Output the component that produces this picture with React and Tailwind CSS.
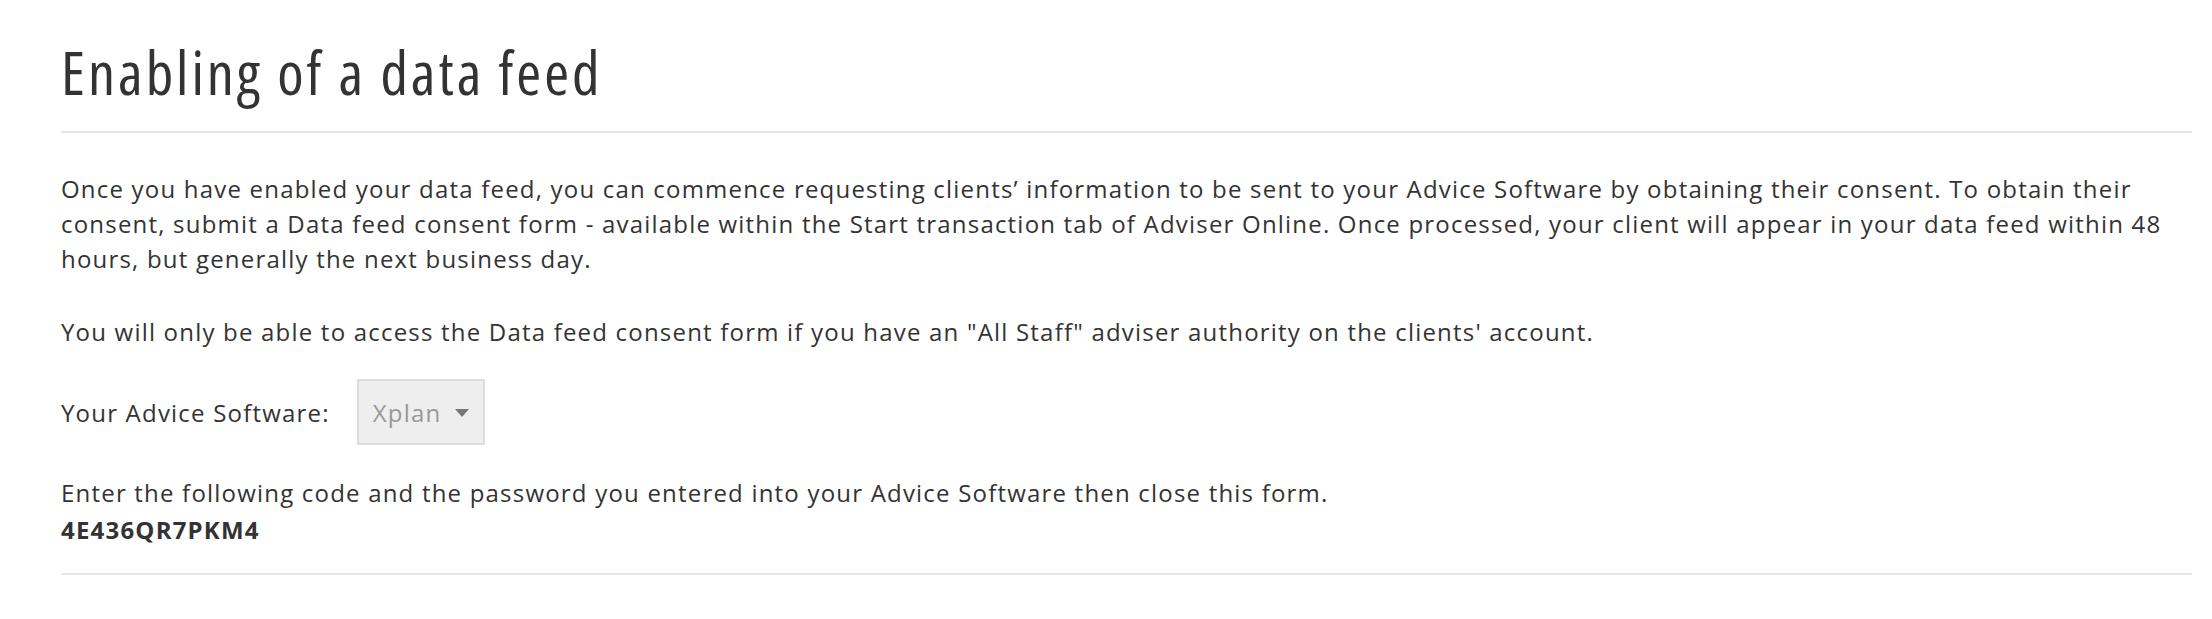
export default function App() {
  return (
    <div className="min-h-[619px] bg-white pl-[61px] pr-[20px] pt-[42px] text-[#333] font-['Open_Sans',sans-serif]">
      {/* Heading */}
      <h1 className="border-b-2 border-[#e5e5e5] pb-[29px] text-[60px] font-normal leading-[60px] tracking-[3px] [font-stretch:85%]">
        Enabling of a data feed
      </h1>

      <div className="text-[24px] leading-[35px] tracking-[1.2px]">
        <p className="mt-[38px]">
          Once you have enabled your data feed, you can commence requesting clients’ information to be sent to your Advice Software by obtaining their consent. To obtain their consent, submit a Data feed consent form - available within the Start transaction tab of Adviser Online. Once processed, your client will appear in your data feed within 48 hours, but generally the next business day.
        </p>

        <p className="mt-[38px]">
          You will only be able to access the Data feed consent form if you have an "All Staff" adviser authority on the clients' account.
        </p>

        {/* Advice software select */}
        <div className="mt-[30px] flex items-center gap-[27px]">
          <span>Your Advice Software:</span>
          <div className="flex h-[66px] w-[128px] items-center justify-between border-2 border-[#dcdcdc] bg-[#eeeeee] pl-[14px] pr-[14px] text-[#999]">
            <span>Xplan</span>
            <svg width="14" height="8" viewBox="0 0 14 8" className="mt-[2px]">
              <path d="M0 0 L14 0 L7 8 Z" fill="#777" />
            </svg>
          </div>
        </div>

        <div className="mt-[30px] border-b-2 border-[#e5e5e5] pb-[26px]">
          <p>Enter the following code and the password you entered into your Advice Software then close this form.</p>
          <p className="mt-[2px] font-bold">4E436QR7PKM4</p>
        </div>
      </div>
    </div>
  )
}
